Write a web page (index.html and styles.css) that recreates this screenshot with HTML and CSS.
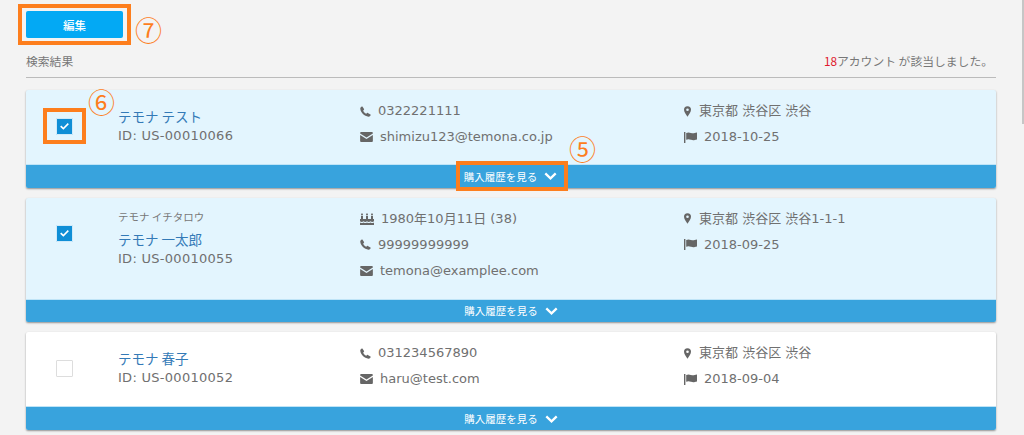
FILE: index.html
```html
<!DOCTYPE html>
<html lang="ja">
<head>
<meta charset="utf-8">
<title>検索結果</title>
<link rel="stylesheet" href="styles.css">
</head>
<body>
<svg class="defs" width="0" height="0" aria-hidden="true">
  <symbol id="i-phone" viewBox="0 0 12 12"><path d="M2.6.6 4.400 3.400c.2.3.1.6-.1.8l-.9.9c.5 1.200 2 2.700 3.400 3.400l.9-.9c.2-.2.5-.3.8-.1l2.900 1.800c.3.2.3.5.2.7-.4 1-1.300 1.700-2.300 1.600C4.700 11.200.7 7 .3 3 .2 2 .9 1.100 1.900.5c.3-.1.5-.1.7.1z"/></symbol>
  <symbol id="i-mail" viewBox="0 0 14 11"><path d="M1 0h12c.6 0 1 .4 1 1v.6L7 6 0 1.600V1c0-.6.4-1 1-1zM0 3.200 7 7.600l7-4.400V10c0 .6-.4 1-1 1H1c-.6 0-1-.4-1-1z"/></symbol>
  <symbol id="i-pin" viewBox="0 0 8 12"><path fill-rule="evenodd" d="M4 0a4 4 0 0 1 4 4c0 2.200-2.400 5.800-4 8C2.400 9.800 0 6.200 0 4a4 4 0 0 1 4-4zm0 2.500a1.500 1.500 0 1 0 0 3 1.500 1.500 0 0 0 0-3z"/></symbol>
  <symbol id="i-flag" viewBox="0 0 13 11"><path d="M0 0h1.400v11H0zM2.200 1c2-1 3-.6 4.800 0s3 .4 6-.4V7.400c-3 1-4 1-6 .4S4.200 6.900 2.200 7.800z"/></symbol>
  <symbol id="i-cake" viewBox="0 0 14 12"><path d="M2 0c.7.700 1 1.200 1 1.700 0 .4-.4.700-1 .7s-1-.3-1-.7C1 1.200 1.300.7 2 0zm5 0c.7.700 1 1.200 1 1.700 0 .4-.4.700-1 .7s-1-.3-1-.7C6 1.200 6.300.7 7 0zm5 0c.7.700 1 1.200 1 1.700 0 .4-.4.700-1 .7s-1-.3-1-.7c0-.5.300-1 1-1.700zM1 3h2v3.200H1zm5 0h2v3.200H6zm5 0h2v3.200h-2zM0 6h14v2.200c-1.200 1-2.300 1-3.500 0-1.200 1-2.300 1-3.500 0-1.200 1-2.300 1-3.500 0-1.200 1-2.300 1-3.500 0zM0 9.400c1.200.7 2.300.7 3.500 0 1.200.7 2.300.7 3.500 0 1.200.7 2.300.7 3.500 0 1.200.7 2.300.7 3.500 0V12H0z"/></symbol>
  <symbol id="i-chev" viewBox="0 0 12 8"><path d="M1.600.6 6 4.800 10.400.6 12 2.200 6 8 0 2.200z"/></symbol>
  <symbol id="i-check" viewBox="0 0 10 8"><path d="M3.700 7.800 0 4.200l1.300-1.300 2.400 2.300L8.700 0 10 1.300z"/></symbol>
</svg>

<div class="scroll-thumb"></div>
<div class="page">
  <div class="toolbar">
    <div class="callout callout-edit"><button class="edit-btn" type="button">編集</button></div>
    <span class="num num-7">⑦</span>
  </div>

  <div class="result-head">
    <span>検索結果</span>
    <span><em class="count">18</em>アカウント が該当しました。</span>
  </div>

  <section class="card selected">
    <div class="card-body">
      <div class="col-check">
        <span class="callout callout-check"><span class="box checked"><svg class="tick"><use href="#i-check"/></svg></span></span>
        <span class="num num-6">⑥</span>
      </div>
      <div class="col-name">
        <a class="name">テモナ テスト</a>
        <div class="uid">ID: US-00010066</div>
      </div>
      <div class="col-contact">
        <div class="line"><svg class="ic phone"><use href="#i-phone"/></svg><span>0322221111</span></div>
        <div class="line"><svg class="ic mail"><use href="#i-mail"/></svg><span>shimizu123@temona.co.jp</span></div>
      </div>
      <div class="col-addr">
        <div class="line"><svg class="ic pin"><use href="#i-pin"/></svg><span>東京都 渋谷区 渋谷</span></div>
        <div class="line"><svg class="ic flag"><use href="#i-flag"/></svg><span>2018-10-25</span></div>
      </div>
    </div>
    <div class="card-foot has-callout">
      <span class="callout callout-foot"><span class="foot-label">購入履歴を見る</span><svg class="chev"><use href="#i-chev"/></svg></span>
      <span class="num num-5">⑤</span>
    </div>
  </section>

  <section class="card selected">
    <div class="card-body tall">
      <div class="col-check"><span class="box checked"><svg class="tick"><use href="#i-check"/></svg></span></div>
      <div class="col-name">
        <div class="kana">テモナ イチタロウ</div>
        <a class="name">テモナ 一太郎</a>
        <div class="uid">ID: US-00010055</div>
      </div>
      <div class="col-contact">
        <div class="line"><svg class="ic cake"><use href="#i-cake"/></svg><span>1980年10月11日 (38)</span></div>
        <div class="line"><svg class="ic phone"><use href="#i-phone"/></svg><span>99999999999</span></div>
        <div class="line"><svg class="ic mail"><use href="#i-mail"/></svg><span>temona@examplee.com</span></div>
      </div>
      <div class="col-addr">
        <div class="line"><svg class="ic pin"><use href="#i-pin"/></svg><span>東京都 渋谷区 渋谷1-1-1</span></div>
        <div class="line"><svg class="ic flag"><use href="#i-flag"/></svg><span>2018-09-25</span></div>
      </div>
    </div>
    <div class="card-foot"><span class="foot-label">購入履歴を見る</span><svg class="chev"><use href="#i-chev"/></svg></div>
  </section>

  <section class="card">
    <div class="card-body">
      <div class="col-check"><span class="box"></span></div>
      <div class="col-name">
        <a class="name">テモナ 春子</a>
        <div class="uid">ID: US-00010052</div>
      </div>
      <div class="col-contact">
        <div class="line"><svg class="ic phone"><use href="#i-phone"/></svg><span>031234567890</span></div>
        <div class="line"><svg class="ic mail"><use href="#i-mail"/></svg><span>haru@test.com</span></div>
      </div>
      <div class="col-addr">
        <div class="line"><svg class="ic pin"><use href="#i-pin"/></svg><span>東京都 渋谷区 渋谷</span></div>
        <div class="line"><svg class="ic flag"><use href="#i-flag"/></svg><span>2018-09-04</span></div>
      </div>
    </div>
    <div class="card-foot"><span class="foot-label">購入履歴を見る</span><svg class="chev"><use href="#i-chev"/></svg></div>
  </section>
</div>
</body>
</html>
```
FILE: styles.css
```css
* { box-sizing: border-box; }
html, body { margin: 0; height: 435px; overflow: hidden; }
body {
  background: #f3f3f3;
  color: #707070;
  font-family: "DejaVu Sans", "Noto Sans CJK JP", sans-serif;
  font-size: 13px;
}
.defs { position: absolute; }
.scroll-thumb { position: absolute; right: 0; top: 0; width: 2px; height: 124px; background: #c6c6c6; }
.page { width: 996px; padding: 12px 0 0 26px; }

.toolbar { display: flex; align-items: flex-start; height: 33px; }
.callout { border: 4px solid #fd7e1d; display: inline-flex; align-items: center; justify-content: center; }
.callout-edit { position: relative; left: -8px; top: -8px; width: 113px; height: 41px; }
.edit-btn {
  width: 97px; height: 27px; border: 0; border-radius: 2px;
  background: #03a9f4; color: #fff;
  font: 500 11.5px "Noto Sans CJK JP", sans-serif;
}
.num { color: #fd7e1d; font: 400 27px/1 "Noto Sans CJK JP", sans-serif; position: absolute; }
.num-7 { left: 135px; top: 16px; }
.num-6 { left: 88px; top: 88px; }
.num-5 { left: 569px; top: 135px; }

.result-head {
  display: flex; justify-content: space-between; align-items: center;
  height: 33px; border-bottom: 1px solid #bbb;
  font-size: 11.8px; color: #777; padding: 0 3px 2px 0;
  font-family: "Noto Sans CJK JP", sans-serif;
}
.count { color: #e0182d; font-style: normal; }

.card {
  background: #fff;
  box-shadow: 0 1px 2px rgba(0,0,0,.4);
  border-radius: 2px;
  margin-top: 10.2px;
}
.result-head + .card { margin-top: 12px; }
.card.selected { background: #e3f5fe; }
.card-body { display: flex; height: 74px; }
.card-body.tall { height: 101px; }
.col-check { width: 92px; flex: none; display: flex; align-items: center; justify-content: center; padding-right: 16px; height: 72px; }
.col-name { width: 242px; flex: none; padding-top: 17px; }
.col-contact { width: 323px; flex: none; padding-top: 8px; }
.col-addr { flex: 1; padding-top: 8px; margin-left: -1px; }
.name { display: block; color: #337ab7; font: 13.5px/19px "Noto Sans CJK JP", sans-serif; }
.uid { line-height: 19px; letter-spacing: .28px; }
.kana { font: 10.5px/14px "Noto Sans CJK JP", sans-serif; margin: -5px 0 6px; color: #777; }
.line { display: flex; align-items: center; height: 26px; gap: 7px; line-height: 18px; }
.ic { fill: #666; flex: none; }
.phone { width: 11px; height: 11px; }
.mail { width: 13px; height: 10px; }
.pin { width: 7px; height: 11px; margin-left: 2px; margin-right: 1px; }
.flag { width: 13px; height: 11px; margin-left: 2px; }
.cake { width: 14px; height: 12px; }

.box { width: 17px; height: 17px; display: inline-flex; align-items: center; justify-content: center; background: #fff; border: 1px solid #ddd; border-radius: 1px; }
.box.checked { background: #0f8ed6; border-color: #cfeafa; }
.tick { width: 9px; height: 7px; fill: #fff; }
.callout-check { width: 43px; height: 36px; }

.card-foot {
  height: 23.5px;
  background: #38a3dd;
  border-top: 1px solid #bfe4f7;
  color: #fff;
  display: flex; align-items: center; justify-content: center; gap: 7px;
  font: 10.5px "Noto Sans CJK JP", sans-serif;
  border-radius: 0 0 2px 2px;
}
.chev { width: 13px; height: 8px; fill: #fff; }
.callout-foot { height: 30px; width: 112px; gap: 7px; flex: none; margin-left: 2px; padding-right: 3px; }
```
